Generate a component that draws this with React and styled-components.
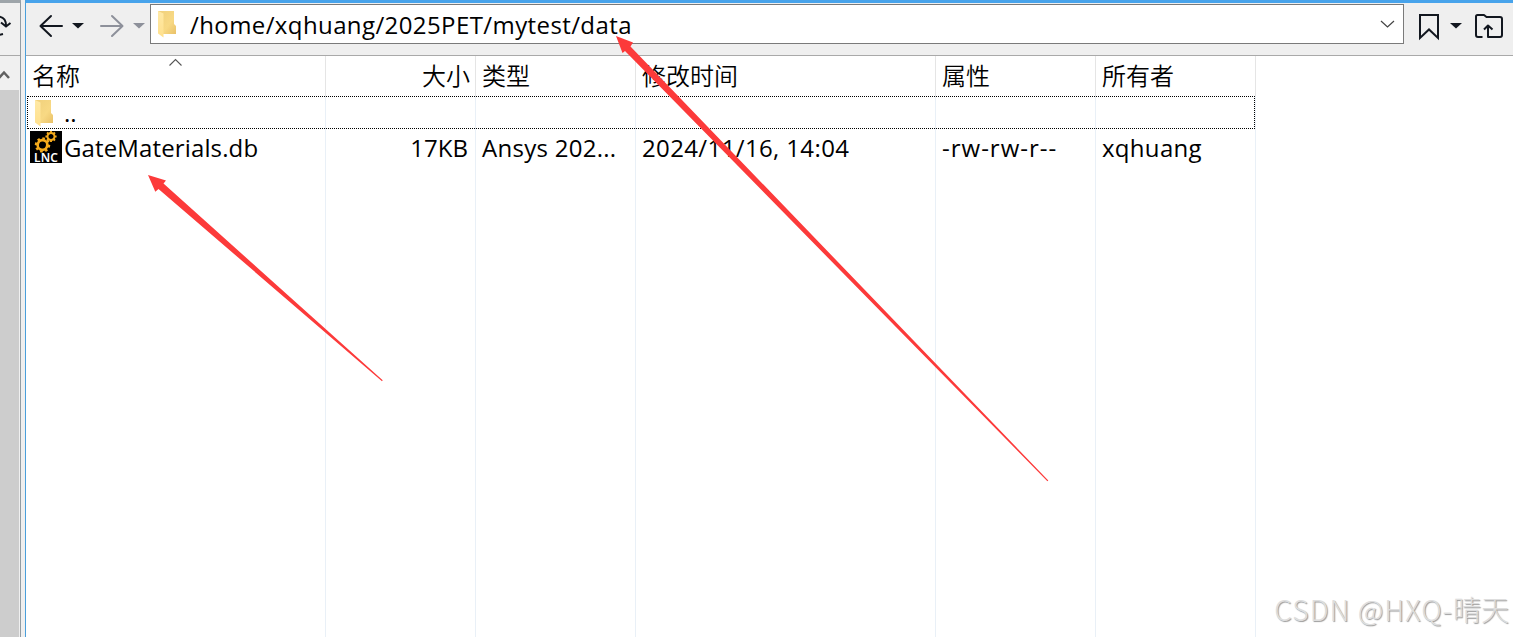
import styled, { createGlobalStyle } from "styled-components"

const GlobalStyle = createGlobalStyle`
* {
    box-sizing: border-box;
}

body {
    margin: 0;
    overflow: hidden;
    background: #ffffff;
    color: #000000;
    font-family: "Open Sans", "Noto Sans CJK SC", sans-serif;
    font-size: 24px;
}
`

const Main = styled.div`
position: relative;
display: flex;
width: 100%;
height: 100vh;
overflow: hidden;
`

const SidePane = styled.div`
    display: flex;
    flex-direction: column;
    width: 21px;
    flex-shrink: 0;
    border-top: 3px solid #9ea5aa;
    border-right: 1px solid #929ca3;
    background: #f0f0f0;
`

const SideTools = styled.div`
    height: 53px;
    border-bottom: 1px solid #a9a9a9;

    svg {
        display: block;
    }
`

const ScrollUp = styled.div`
    height: 34px;
    flex-shrink: 0;

    svg {
        display: block;
    }
`

const ScrollThumb = styled.div`
    flex: 1;
    width: 19px;
    background: #cdcdcd;
`

const Splitter = styled.div`
    width: 4px;
    flex-shrink: 0;
    background: #efefef;
`

const RemotePane = styled.div`
    display: flex;
    flex-direction: column;
    flex: 1;
    min-width: 0;
    border-left: 1px solid #4a9fdb;
`

const Toolbar = styled.div`
    display: flex;
    align-items: flex-start;
    height: 56px;
    flex-shrink: 0;
    border-top: 3px solid #47a3eb;
    border-bottom: 1px solid #a9a9a9;
    background: #efefef;
`

const ToolGroup = styled.div`
    width: ${props => props.$width}px;
    flex-shrink: 0;

    svg {
        display: block;
    }
`

const AddressBar = styled.div`
    display: flex;
    align-items: center;
    flex: 1;
    height: 40px;
    margin-top: 1px;
    padding: 0 8px 0 6px;
    border: 1px solid #7a7a7a;
    background: #ffffff;
`

const Path = styled.span`
    flex: 1;
    margin-left: 12px;
    padding-top: 1px;
    line-height: 36px;
    letter-spacing: 0.4px;
    white-space: nowrap;
`

const Table = styled.div`
    display: flex;
    flex-direction: column;
    flex: 1;
    width: 1230px;
`

const Row = styled.div`
    position: relative;
    display: grid;
    grid-template-columns: 300px 150px 160px 300px 160px 160px;
    height: ${props => props.$height}px;
`

const FocusRow = styled(Row)`
    &::after {
        content: "";
        position: absolute;
        inset: 0 1px 0 1px;
        border: 1px dotted #000000;
    }
`

const EmptyRow = styled(Row)`
    flex: 1;
    height: auto;
`

const Cell = styled.div`
    display: flex;
    align-items: center;
    justify-content: ${props => (props.$right ? "flex-end" : "flex-start")};
    padding: 0 7px 0 6px;
    border-right: 1px solid #e9f0f7;
    letter-spacing: ${props => props.$spacing || 0}px;
    white-space: nowrap;
`

const HeadCell = styled(Cell)`
    position: relative;
    padding-right: 5px;
    border-right-color: #e5e5e5;
    font-weight: 350;
    line-height: 40px;
`

const NameCell = styled(Cell)`
    padding-left: ${props => props.$indent}px;
`

const SortMark = styled.svg`
    position: absolute;
    top: 2px;
    left: 143px;
`

const FileName = styled.span`
    margin-left: ${props => props.$gap}px;
`

const Overlay = styled.svg`
    position: absolute;
    top: 0;
    left: 0;
    pointer-events: none;
`

const Watermark = styled.div`
    position: absolute;
    right: 4px;
    bottom: 8px;
    color: #dedede;
    font-family: "Noto Sans CJK SC", sans-serif;
    font-size: 28px;
    font-weight: 300;
    line-height: 40px;
    text-shadow: 1px 1px 1px #999999;
    white-space: nowrap;

    span {
        letter-spacing: 1.1px;
    }
`

function Folder() {
    return (
        <svg width="21" height="32" viewBox="0 0 21 32">
            <defs>
                <linearGradient id="folderBack" x1="0" y1="0" x2="1" y2="1">
                    <stop offset="0" stopColor="#f0d07c" />
                    <stop offset="0.6" stopColor="#f8d984" />
                    <stop offset="1" stopColor="#e9c168" />
                </linearGradient>
                <linearGradient id="folderFront" x1="0" y1="0" x2="0" y2="1">
                    <stop offset="0" stopColor="#ffe9a6" />
                    <stop offset="1" stopColor="#ffe08c" />
                </linearGradient>
            </defs>
            <path d="M1 3h16v13l2 2v8H6z" fill="url(#folderBack)" />
            <path d="M1 3l5.500 2.500v24L1 25.500z" fill="url(#folderFront)" />
        </svg>
    )
}

const teeth = [0, 45, 90, 135, 180, 225, 270, 315]

function Gear({ x, y, r, turn }) {
    return (
        <g transform={`translate(${x} ${y}) rotate(${turn})`} stroke="#f5ab1c" fill="none">
            <circle r={r} strokeWidth={r * 0.55} />
            {teeth.map(angle => (
                <path key={angle} d={`M0 ${-r * 1.1}V${-r * 1.6}`} strokeWidth={r * 0.55} transform={`rotate(${angle})`} />
            ))}
        </g>
    )
}

const IconText = styled.text`
    fill: #ffffff;
    font-family: "Noto Sans", sans-serif;
    font-size: 12px;
    font-weight: 600;
`

const DbSvg = styled.svg`
    flex-shrink: 0;
    overflow: visible;
`

function DbIcon() {
    return (
        <DbSvg width="32" height="32" viewBox="0 0 32 32">
            <rect width="32" height="32" fill="#000000" />
            <Gear x={12.5} y={14} r={4.800} turn={10} />
            <Gear x={21} y={5.500} r={3.500} turn={0} />
            <IconText x="4" y="31.3" textLength="24" lengthAdjust="spacingAndGlyphs">LNC</IconText>
        </DbSvg>
    )
}

function History() {
    return (
        <svg width="124" height="48" viewBox="26 3 124 48" fill="none" strokeWidth="2" strokeLinecap="round" strokeLinejoin="round">
            <path d="M62 26H41M51 16L40.500 26L51 36" stroke="#12171f" />
            <path d="M72 23h12l-6 5.500z" fill="#12171f" />
            <path d="M101 26h21M112 16l10.500 10L112 36" stroke="#8d909a" />
            <path d="M133 23h12l-6 5.500z" fill="#8d909a" />
        </svg>
    )
}

function Bookmarks() {
    return (
        <svg width="109" height="48" viewBox="1404 3 109 48" fill="none" stroke="#12171f" strokeWidth="2">
            <path d="M1420 15h18v23l-9-8.500-9 8.500z" />
            <path d="M1450 23h12l-6 5.500z" fill="#12171f" stroke="none" />
            <path d="M1482.500 37h-4.500q-2 0-2-2V16.500q0-1.500 1.500-1.500h6.500l2.500 2h13.500q2 0 2 2v16q0 2-2 2h-12V25.500M1484 29.500l4-4 4.500 4" strokeLinejoin="round" />
        </svg>
    )
}

function Arrows() {
    return (
        <Overlay width="1513" height="637" viewBox="0 0 1513 637" fill="#fc3a3a">
            <path d="M148 175L166 180.500L163.500 183.500L382.700 380.300L382 381.200L158.500 189L155.300 191.700z" />
            <path d="M616 36L633 42.500L630.500 46.500L1048.300 480.500L1047.400 481.300L625 51L622.500 53z" />
        </Overlay>
    )
}

export default function App() {
    return (
        <Main>
            <GlobalStyle />
            <SidePane>
                <SideTools>
                    <svg width="19" height="48" viewBox="0 3 19 48" fill="none" stroke="#12171f" strokeWidth="2">
                        <path d="M-1 16.500q7 1 7 9M1 22.500l5 4 4.500-3.500M-1 35l4-1" />
                    </svg>
                </SideTools>
                <ScrollUp>
                    <svg width="19" height="34" viewBox="0 56 19 34" fill="none" stroke="#606060" strokeWidth="2.5">
                        <path d="M-1 78l5-5.500 5 5.500" />
                    </svg>
                </ScrollUp>
                <ScrollThumb />
            </SidePane>
            <Splitter />
            <RemotePane>
                <Toolbar>
                    <ToolGroup $width={124}><History /></ToolGroup>
                    <AddressBar>
                        <Folder />
                        <Path>/home/xqhuang/2025PET/mytest/data</Path>
                        <svg width="16" height="10" viewBox="0 0 16 10" fill="none" stroke="#444444" strokeWidth="1.2">
                            <path d="M2 2l6.500 6L15 2" />
                        </svg>
                    </AddressBar>
                    <ToolGroup $width={109}><Bookmarks /></ToolGroup>
                </Toolbar>
                <Table>
                    <Row $height={40}>
                        <HeadCell>
                            名称
                            <SortMark width="14" height="9" viewBox="0 0 14 9" fill="none" stroke="#555555" strokeWidth="1.1">
                                <path d="M0.500 7.500L6.500 1.500L12.500 7.500" />
                            </SortMark>
                        </HeadCell>
                        <HeadCell $right>大小</HeadCell>
                        <HeadCell>类型</HeadCell>
                        <HeadCell>修改时间</HeadCell>
                        <HeadCell>属性</HeadCell>
                        <HeadCell>所有者</HeadCell>
                    </Row>
                    <FocusRow $height={33}>
                        <NameCell $indent={8}>
                            <Folder />
                            <FileName $gap={9}>..</FileName>
                        </NameCell>
                        <Cell />
                        <Cell />
                        <Cell />
                        <Cell />
                        <Cell />
                    </FocusRow>
                    <Row $height={36}>
                        <NameCell $indent={4} $spacing={0.13}>
                            <DbIcon />
                            <FileName $gap={2}>GateMaterials.db</FileName>
                        </NameCell>
                        <Cell $right>17KB</Cell>
                        <Cell $spacing={0.27}>Ansys 202...</Cell>
                        <Cell $spacing={0.37}>2024/11/16, 14:04</Cell>
                        <Cell $spacing={1}>-rw-rw-r--</Cell>
                        <Cell $spacing={0.3}>xqhuang</Cell>
                    </Row>
                    <EmptyRow>
                        <Cell />
                        <Cell />
                        <Cell />
                        <Cell />
                        <Cell />
                        <Cell />
                    </EmptyRow>
                </Table>
            </RemotePane>
            <Arrows />
            <Watermark><span>CSDN @HXQ-</span>晴天</Watermark>
        </Main>
    )
}
